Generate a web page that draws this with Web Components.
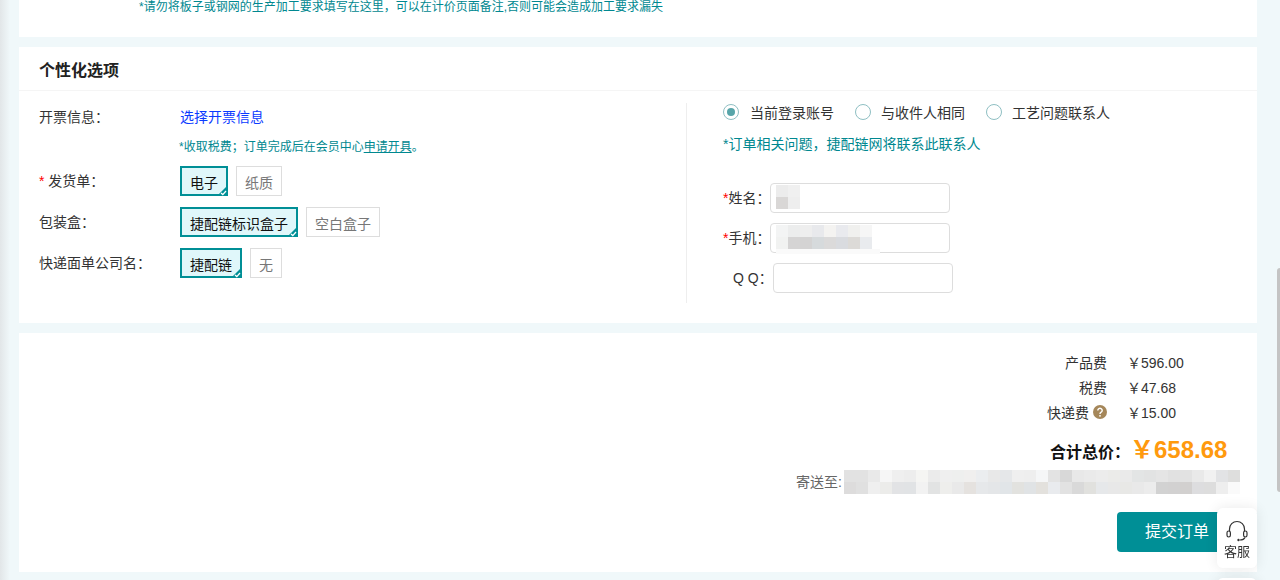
<!DOCTYPE html>
<html lang="zh-CN"><head><meta charset="utf-8"><title>订单</title>
<style>
html,body{margin:0;height:580px;overflow:hidden}
body{background:#f0f8fa;font:14px "Liberation Sans","Noto Sans CJK SC",sans-serif;color:#333}
main{display:flex;flex-direction:column;gap:10px;width:1238px;margin-left:19px}
</style></head><body>
<template id="t-chip"><style>
:host{display:inline-flex;box-sizing:border-box;height:30px;align-items:center;padding:2px 8px 0;border:1px solid #ddd;color:#777;font-size:14px;position:relative;background:#fff}
:host([on]){border:2px solid #008f96;padding:2px 8px 0;color:#111;background:#e0f7fa}
svg{display:none;position:absolute;right:-2px;bottom:-2px}
:host([on]) svg{display:block}
</style><slot></slot><svg width="11" height="11" viewBox="0 0 11 11"><path d="M11 0V11H0Z" fill="#008f96"/><path d="M4 8 5.800 9.600 9 6" fill="none" stroke="#fff" stroke-width="1.300"/></svg></template>

<template id="t-row"><style>
:host{display:flex;align-items:center;height:30px}
.l{width:141px;flex:none;color:#333;position:relative;top:var(--ly,-1px)}
.v{display:flex;gap:8px;align-items:center}
</style><div class="l"><slot name="l"></slot></div><div class="v"><slot></slot></div></template>

<template id="t-radio"><style>
:host{display:inline-flex;align-items:center;gap:10px;color:#333}
i{box-sizing:border-box;width:16px;height:16px;border-radius:50%;border:1px solid #8fbfc3;display:grid;place-items:center;background:#fff}
:host([on]) i::after{content:"";width:8px;height:8px;border-radius:50%;background:#57a5a9}
</style><i></i><slot></slot></template>

<template id="t-field"><style>
:host{display:flex;align-items:center;height:30px;position:relative}
.l{width:var(--lw,47px);flex:none;color:#333;white-space:pre;margin-top:-2px}
.b{box-sizing:border-box;width:180px;height:30px;border:1px solid #ddd;border-radius:4px;background:#fff}
::slotted(x-mosaic){position:absolute;top:2px;left:53px}
</style><div class="l"><slot name="l"></slot></div><div class="b"></div><slot></slot></template>

<template id="t-mosaic"><style>
:host{display:grid;grid-auto-rows:var(--s,12px);grid-template-columns:repeat(var(--c,2),var(--s,12px))}
i{display:block}
</style></template>

<template id="t-price"><style>
:host{display:flex;height:25px;align-items:center;justify-content:flex-end}
.l{display:flex;align-items:center;justify-content:flex-end;color:#333}
.v{width:100px;margin-left:20px;color:#333;white-space:pre}
</style><div class="l"><slot name="l"></slot></div><div class="v"><slot></slot></div></template>

<template id="t-service"><style>
:host{position:fixed;left:1217px;top:var(--t,508px);width:40px;height:60px;background:#fff;border-radius:6px;box-shadow:0 0 14px rgba(0,0,0,.09);display:flex;flex-direction:column;align-items:center;padding-top:11px;box-sizing:border-box;font-size:13px;color:#333;line-height:17px}
svg{display:block}
:host([blank]) svg{display:none}
</style><svg width="24" height="24" viewBox="0 0 24 24" fill="none" stroke="#333" stroke-width="1.200"><path d="M4.500 12.500V10a7.500 7.500 0 0 1 15 0v2.500"/><rect x="2" y="12" width="3.400" height="6" rx="1.700"/><rect x="18.600" y="12" width="3.400" height="6" rx="1.700"/><path d="M20 18.500c-.8 1.700-2.500 2.500-5 2.500"/><circle cx="13.500" cy="21" r="1.200" fill="#333" stroke="none"/></svg><slot></slot></template>

<template id="t-card"><style>
:host{display:block;background:#fff;box-sizing:border-box;height:var(--h,auto);overflow:hidden}
</style><slot></slot></template>

<main>
<x-card style="--h:37px"><div style="margin-left:120px;margin-top:-1px;font-size:12px;line-height:17px;color:#008890;white-space:nowrap">*请勿将板子或钢网的生产加工要求填写在这里，可以在计价页面备注,否则可能会造成加工要求漏失</div></x-card>

<x-card style="--h:276px">
  <div style="height:44px;box-sizing:border-box;border-bottom:1px solid #f5f5f5;padding-left:20px;font-size:16px;font-weight:700;line-height:47px;color:#222">个性化选项</div>
  <div style="display:grid;grid-template-columns:667px 1fr;">
    <div style="padding:10px 0 0 20px;display:flex;flex-direction:column">
      <x-row style="--ly:0px"><span slot="l">开票信息：</span><span style="color:#0b3bff">选择开票信息</span></x-row>
      <div style="margin:6px 0 9px 140px;height:20px;line-height:20px;font-size:12px;color:#008890;white-space:nowrap">*收取税费；订单完成后在会员中心<u>申请开具</u>。</div>
      <div style="display:flex;flex-direction:column;gap:11px">
        <x-row><span slot="l"><span style="color:#f00">*</span> 发货单：</span><x-chip on>电子</x-chip><x-chip>纸质</x-chip></x-row>
        <x-row><span slot="l">包装盒：</span><x-chip on>捷配链标识盒子</x-chip><x-chip>空白盒子</x-chip></x-row>
        <x-row><span slot="l">快递面单公司名：</span><x-chip on>捷配链</x-chip><x-chip>无</x-chip></x-row>
      </div>
    </div>
    <div style="margin-top:12px;height:200px;border-left:1px solid #eee;padding-left:36px;box-sizing:border-box">
      <div style="display:flex;height:20px;gap:21px;align-items:center;margin-top:-1px">
        <x-radio on style="gap:11px">当前登录账号</x-radio><x-radio>与收件人相同</x-radio><x-radio>工艺问题联系人</x-radio>
      </div>
      <div style="margin-top:12px;height:20px;line-height:20px;color:#008890;font-size:14px;white-space:nowrap">*订单相关问题，捷配链网将联系此联系人</div>
      <div style="margin-top:29px;display:flex;flex-direction:column;gap:10px">
        <x-field><span slot="l"><span style="color:#f00">*</span>姓名：</span><x-mosaic c="2" colors="ececec,f0f0f0,d9d7d6,eeeeee"></x-mosaic></x-field>
        <x-field><span slot="l"><span style="color:#f00">*</span>手机：</span><x-mosaic c="8" colors="f3f4f4,eceded,eeeeee,e8e9ec,f4f3f1,e9eaee,f0f0ee,f6f6f6,f1f2f1,d5d4d4,d4d3d3,d6dadc,dbdada,d9dbdf,dcdad7,e9ebee"></x-mosaic><x-mosaic colors="" style="display:block;top:26px;width:104px;height:5px;background:#fafafa"></x-mosaic></x-field>
        <x-field style="--lw:50px"><span slot="l" style="padding-left:10px">Q Q：</span></x-field>
      </div>
    </div>
  </div>
</x-card>

<x-card style="--h:239px">
  <div style="padding:16px 30px 0 0;display:flex;flex-direction:column">
    <x-price><span slot="l">产品费</span>￥596.00</x-price>
    <x-price><span slot="l">税费</span>￥47.68</x-price>
    <x-price><span slot="l" style="display:flex;align-items:center;gap:4px">快递费<svg width="14" height="14" viewBox="0 0 14 14"><circle cx="7" cy="7" r="7" fill="#a5875a"/><path d="M4.800 5.400a2.200 2.100 0 1 1 3.400 1.800c-.8.500-1.200.9-1.200 1.700" fill="none" stroke="#fff" stroke-width="1.400"/><circle cx="7" cy="10.800" r=".9" fill="#fff"/></svg></span>￥15.00</x-price>
  </div>
  <div style="display:flex;justify-content:flex-end;align-items:center;height:40px;margin-top:4px;padding-right:31px">
    <span style="font-weight:700;font-size:16px;color:#111;margin-top:6px">合计总价：</span>
    <span style="font-weight:700;font-size:24px;color:#ff9a0e;width:96px;text-align:right;white-space:nowrap;margin-top:-2px">￥658.68</span>
  </div>
  <div style="display:flex;justify-content:flex-end;align-items:center;height:26px;padding-right:17px;color:#666">
    <span style="margin-right:2px">寄送至:</span>
    <x-mosaic c="33" style="margin-top:2px" colors="e2e2e2,e2e2e2,e9e9e9,f6f6f6,efefef,ededed,f5f5f3,ebebeb,efefef,eeefee,f0efee,ebedef,e8e8e8,e5e7e9,efefef,eeeeee,f5f6f7,e3e3e3,d8d8d8,e8e8e8,eaeaea,ececec,ebebe9,eaeaea,e3e5e5,e2e3e3,e5e5e5,e1e1e1,e2e2e2,e9e9e9,f1f1f1,e2e3e5,dededd,dddcdc,e0e0e0,efefef,ececea,e2e3e5,e1e3e5,f2f2f2,e2e3e3,eeeeec,e9e9e9,e5e2df,e6e8ea,e4e6e8,e1e5e8,e2e2df,e0e3e5,e3e1dd,e9ebee,e2e2e2,d9d9d9,e1e1de,e6e8ea,e8e8e8,e8e8e6,e9e9e9,ececec,d2d2d2,d2d1d1,d2d0cf,dddddf,dddddd,eeeeee,fafafa"></x-mosaic>
  </div>
  <div style="display:flex;justify-content:flex-end;margin-top:18px">
    <div style="width:140px;height:40px;background:#008f96;color:#fff;border-radius:4px;font-size:16px;line-height:40px;box-sizing:border-box;padding-left:28px">提交订单</div>
  </div>
</x-card>
</main>

<x-service>客服</x-service>
<x-service blank style="--t:578px"></x-service>
<x-edge></x-edge>
<x-thumb></x-thumb>

<script>
const def=(n,t,extra)=>customElements.define(n,class extends HTMLElement{
  constructor(){super();const r=this.attachShadow({mode:'open'});
    if(t)r.append(document.getElementById(t).content.cloneNode(true));}
  connectedCallback(){extra&&extra(this,this.shadowRoot)}
});
def('x-card','t-card');def('x-chip','t-chip');def('x-row','t-row');def('x-radio','t-radio');
def('x-field','t-field');def('x-price','t-price');def('x-service','t-service');
def('x-mosaic','t-mosaic',(h,r)=>{
  h.style.setProperty('--c',h.getAttribute('c')||1);
  for(const col of h.getAttribute('colors').split(',').filter(Boolean)){const i=document.createElement('i');i.style.background='#'+col;r.append(i)}
});
def('x-edge',null,(h,r)=>{r.innerHTML='<style>:host{position:fixed;left:0;top:0;width:10px;height:580px;background:linear-gradient(90deg,#e2e6e8,#f0f8fa);pointer-events:none}</style>'});
def('x-thumb',null,(h,r)=>{r.innerHTML='<style>:host{position:fixed;left:1277px;top:268px;width:3px;height:224px;background:#c4c4c4;border-radius:3px 0 0 3px}</style>'});
</script>
</body></html>
